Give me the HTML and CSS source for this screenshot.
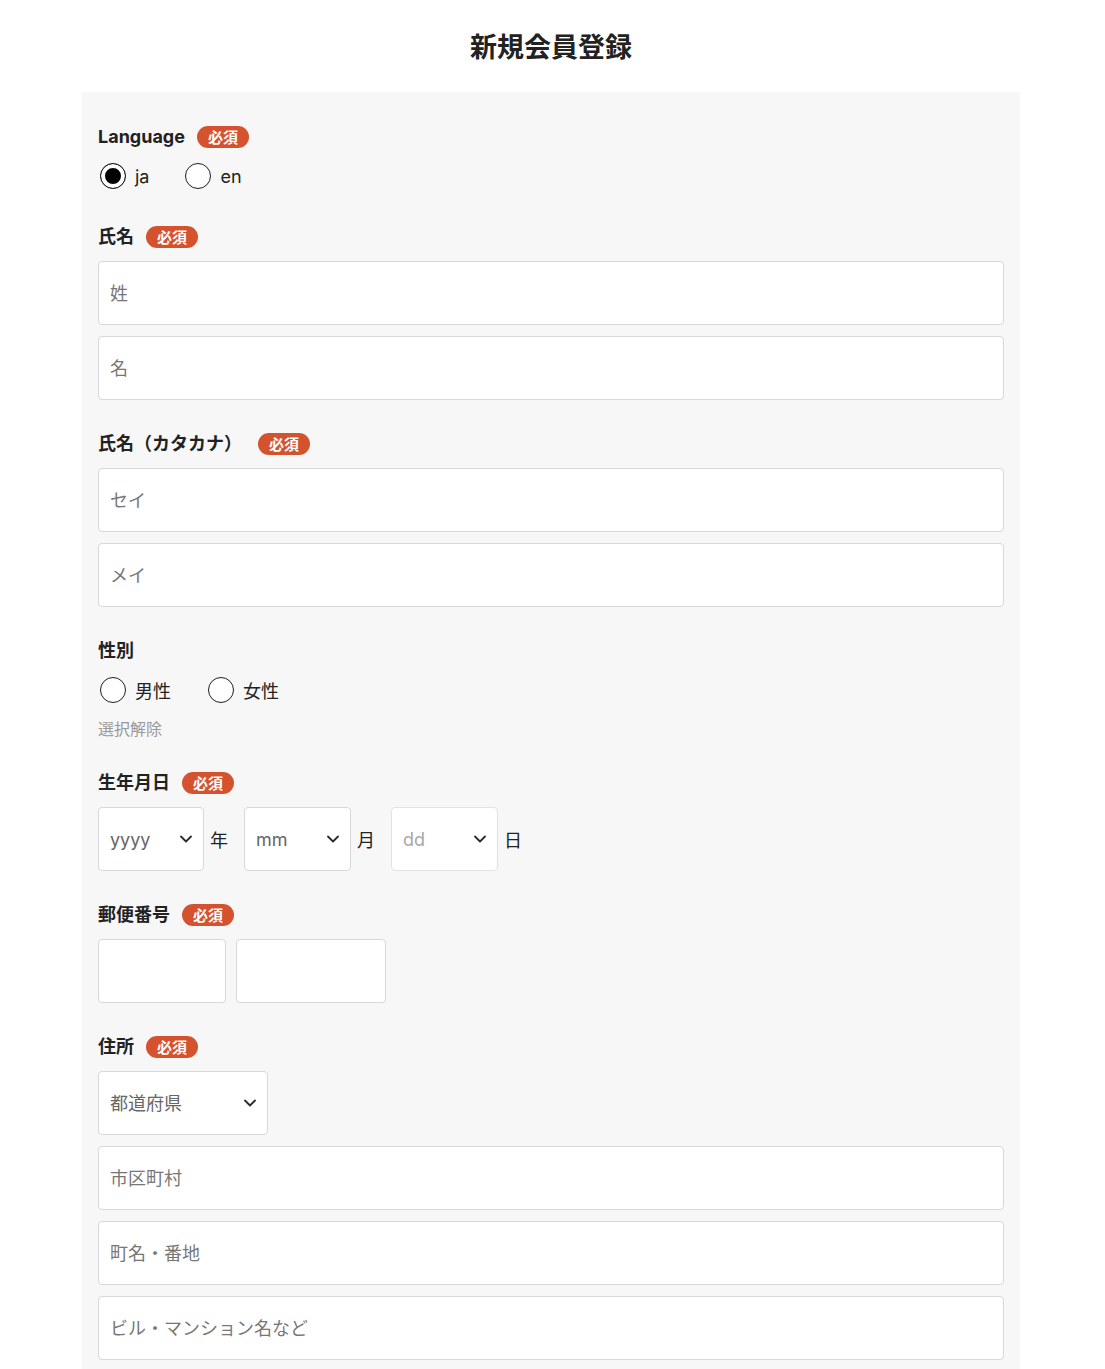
FILE: index.html
```html
<!DOCTYPE html>
<html lang="ja">
<head>
<meta charset="utf-8">
<title>新規会員登録</title>
<link rel="stylesheet" href="styles.css">
</head>
<body>
<header class="page-head">
  <h1 class="page-title">新規会員登録</h1>
</header>
<main class="panel">
  <form class="form">
    <div class="field">
      <div class="label-row"><span class="label">Language</span><span class="badge">必須</span></div>
      <div class="radio-row">
        <label class="radio"><input type="radio" name="lang" checked><span>ja</span></label>
        <label class="radio"><input type="radio" name="lang"><span>en</span></label>
      </div>
    </div>

    <div class="field">
      <div class="label-row"><span class="label">氏名</span><span class="badge">必須</span></div>
      <div class="stack">
        <input class="text-input" type="text" placeholder="姓">
        <input class="text-input" type="text" placeholder="名">
      </div>
    </div>

    <div class="field">
      <div class="label-row"><span class="label label-kana">氏名（カタカナ）</span><span class="badge">必須</span></div>
      <div class="stack">
        <input class="text-input" type="text" placeholder="セイ">
        <input class="text-input" type="text" placeholder="メイ">
      </div>
    </div>

    <div class="field">
      <div class="label-row"><span class="label">性別</span></div>
      <div class="radio-row radio-row-wide">
        <label class="radio"><input type="radio" name="gender"><span>男性</span></label>
        <label class="radio"><input type="radio" name="gender"><span>女性</span></label>
      </div>
      <div class="clear-link">選択解除</div>
    </div>

    <div class="field">
      <div class="label-row"><span class="label">生年月日</span><span class="badge">必須</span></div>
      <div class="date-row">
        <div class="select-wrap w-year">
          <select class="select"><option>yyyy</option></select>
          <svg class="chevron" viewBox="0 0 12 8" width="12" height="8"><path d="M1 1.5 6 6.5 11 1.5" fill="none" stroke="#2a2a2a" stroke-width="1.8" stroke-linecap="round" stroke-linejoin="round"/></svg>
        </div>
        <span class="unit">年</span>
        <div class="select-wrap w-month">
          <select class="select"><option>mm</option></select>
          <svg class="chevron" viewBox="0 0 12 8" width="12" height="8"><path d="M1 1.5 6 6.5 11 1.5" fill="none" stroke="#2a2a2a" stroke-width="1.8" stroke-linecap="round" stroke-linejoin="round"/></svg>
        </div>
        <span class="unit">月</span>
        <div class="select-wrap w-day is-disabled">
          <select class="select" disabled><option>dd</option></select>
          <svg class="chevron" viewBox="0 0 12 8" width="12" height="8"><path d="M1 1.5 6 6.5 11 1.5" fill="none" stroke="#2a2a2a" stroke-width="1.8" stroke-linecap="round" stroke-linejoin="round"/></svg>
        </div>
        <span class="unit">日</span>
      </div>
    </div>

    <div class="field">
      <div class="label-row"><span class="label">郵便番号</span><span class="badge">必須</span></div>
      <div class="zip-row">
        <input class="text-input zip-first" type="text">
        <input class="text-input zip-second" type="text">
      </div>
    </div>

    <div class="field">
      <div class="label-row"><span class="label">住所</span><span class="badge">必須</span></div>
      <div class="stack">
        <div class="select-wrap w-pref">
          <select class="select"><option>都道府県</option></select>
          <svg class="chevron" viewBox="0 0 12 8" width="12" height="8"><path d="M1 1.5 6 6.5 11 1.5" fill="none" stroke="#2a2a2a" stroke-width="1.8" stroke-linecap="round" stroke-linejoin="round"/></svg>
        </div>
        <input class="text-input" type="text" placeholder="市区町村">
        <input class="text-input" type="text" placeholder="町名・番地">
        <input class="text-input" type="text" placeholder="ビル・マンション名など">
      </div>
    </div>
  </form>
</main>
</body>
</html>
```

FILE: styles.css
```css
* {
  box-sizing: border-box;
}

body {
  margin: 0;
  background: #ffffff;
  color: #222222;
  font-family: Inter, "Noto Sans CJK JP", sans-serif;
}

.page-head {
  height: 92px;
  display: flex;
  align-items: center;
  justify-content: center;
  padding-top: 3px;
  padding-right: 3px;
}

.page-title {
  margin: 0;
  font-size: 27px;
  font-weight: 700;
  line-height: 1;
  color: #222222;
}

.panel {
  width: 938px;
  margin: 0 0 0 82px;
  background: #f7f7f7;
  padding: 33px 16px 40px;
}

.form {
  display: flex;
  flex-direction: column;
  gap: 32px;
}

.field {
  display: flex;
  flex-direction: column;
}

.label-row {
  display: flex;
  align-items: center;
  gap: 12px;
  height: 24px;
  margin-bottom: 12px;
}

.label {
  font-size: 18px;
  font-weight: 700;
  line-height: 24px;
  color: #222222;
}

.label-kana {
  margin-right: 4px;
}

.badge {
  display: inline-flex;
  align-items: center;
  justify-content: center;
  height: 22px;
  padding: 0 11px;
  border-radius: 11px;
  background: #d5522f;
  color: #ffffff;
  font-size: 15px;
  font-weight: 700;
  line-height: 1;
}

.radio-row {
  display: flex;
  align-items: center;
  gap: 36px;
  height: 28px;
  margin-top: 1px;
  margin-bottom: 3px;
  padding-left: 2px;
}

.radio-row-wide {
  gap: 37px;
}

.radio {
  display: flex;
  align-items: center;
  gap: 9px;
  font-size: 18px;
  color: #222222;
}

.radio input {
  appearance: none;
  -webkit-appearance: none;
  margin: 0;
  width: 26px;
  height: 26px;
  border: 1.5px solid #1e1e1e;
  border-radius: 50%;
  background: #ffffff;
}

.radio input:checked {
  background: #000000;
  box-shadow: inset 0 0 0 4px #ffffff;
}

.clear-link {
  margin-top: 12px;
  font-size: 16px;
  line-height: 20px;
  color: #999999;
}

.stack {
  display: flex;
  flex-direction: column;
  gap: 11px;
}

.text-input,
.select {
  height: 64px;
  background: #ffffff;
  border: 1px solid #d8d8d8;
  border-radius: 4px;
  font-family: inherit;
  font-size: 18px;
  color: #222222;
  padding: 0 11px;
  outline: none;
}

.text-input {
  width: 100%;
}

.text-input::placeholder {
  color: #777777;
}

.select-wrap {
  position: relative;
  flex: none;
}

.select {
  appearance: none;
  -webkit-appearance: none;
  width: 100%;
  color: #666666;
}

.chevron {
  position: absolute;
  right: 12px;
  top: 28px;
  pointer-events: none;
}

.is-disabled .select {
  border-color: #e2e2e2;
  color: #a8a8a8;
  opacity: 1;
}

.date-row {
  display: flex;
  align-items: center;
}

.unit {
  font-size: 18px;
  color: #222222;
  margin-left: 6px;
  margin-right: 16px;
}

.w-year {
  width: 106px;
}

.w-month {
  width: 107px;
}

.w-day {
  width: 107px;
}

.w-pref {
  width: 170px;
}

.zip-row {
  display: flex;
  gap: 10px;
}

.zip-first {
  width: 128px;
}

.zip-second {
  width: 150px;
}
```
